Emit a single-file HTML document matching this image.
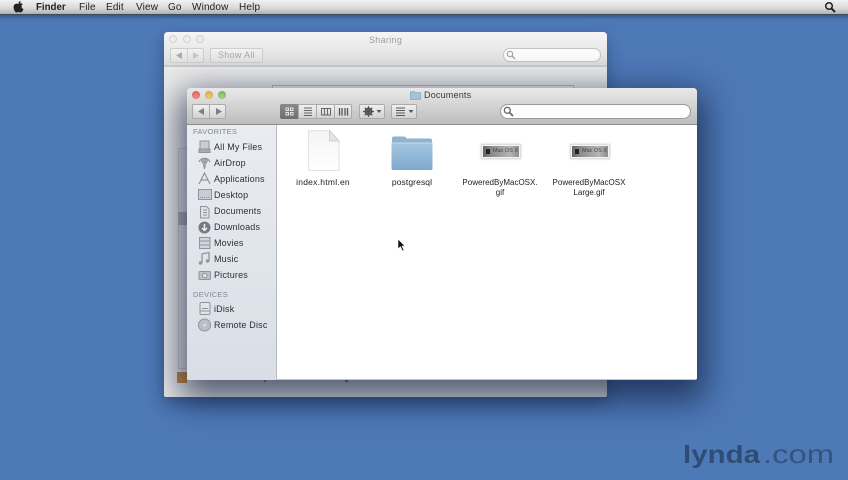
<!DOCTYPE html>
<html style="background:#4e79b7"><head><meta charset="utf-8">
<style>
html,body{margin:0;padding:0}
body{width:848px;height:480px;overflow:hidden;position:relative;background:#4e79b7;font-family:"Liberation Sans",sans-serif;color:#222;filter:blur(.35px)}
div,span,svg{position:absolute;box-sizing:border-box}
.m{top:1px;font-size:10px;line-height:13px;color:#222;white-space:nowrap;letter-spacing:.15px}
.tl{width:8px;height:8px;border-radius:50%}
.gl{width:8px;height:8px;border-radius:50%;background:#ececec;border:1px solid #d2d2d2}
.btn{background:linear-gradient(#f0f0f0,#d2d2d2);border:1px solid #aaa;border-radius:2px;height:15px}
.s{left:214px;font-size:9px;line-height:12px;color:#2c2f36;white-space:nowrap;letter-spacing:.18px}
.f{font-size:8.5px;line-height:10px;color:#222;text-align:center;white-space:nowrap;letter-spacing:.1px}
.g{font-size:8px;letter-spacing:0}
.h{left:193px;font-size:7.5px;line-height:10px;color:#7d8793;letter-spacing:.3px;white-space:nowrap}
</style></head>
<body>
<!-- menu bar -->
<div style="left:0;top:0;width:848px;height:15px;background:linear-gradient(#f2f2f2,#d8d8d8 60%,#b0b0b0);border-bottom:1px solid #3c4a5e"></div>
<div style="left:0;top:15px;width:848px;height:5px;background:linear-gradient(rgba(30,50,85,.45),rgba(30,50,85,0))"></div>
<svg style="left:13px;top:1px" width="11" height="12" viewBox="0 0 11 12"><path d="M5.500 3C4 2.200 1 2.500.6 5.600.3 8 2 11.500 3.600 11.500c.8 0 1.100-.5 2-.5s1.100.5 2 .5c1.200 0 2.400-2 2.900-3.400C9 7.500 8.500 6.300 8.500 5.200c0-1 .6-1.700 1.300-2.100C9 2.100 7 2 5.500 3zM5.400 2.600C5.300 1.400 6.200.2 7.700 0c.1 1.400-1 2.600-2.300 2.600z" fill="#222"/></svg>
<div class="m" style="left:36px;font-weight:bold;letter-spacing:0;font-size:9.7px">Finder</div>
<div class="m" style="left:79px">File</div>
<div class="m" style="left:106px">Edit</div>
<div class="m" style="left:136px">View</div>
<div class="m" style="left:168px">Go</div>
<div class="m" style="left:192px">Window</div>
<div class="m" style="left:239px">Help</div>
<svg style="left:824px;top:1px" width="12" height="12" viewBox="0 0 12 12"><circle cx="5" cy="5" r="3.300" fill="none" stroke="#222" stroke-width="1.500"/><path d="M7.500 7.500L11 11" stroke="#222" stroke-width="2"/></svg>

<!-- back window -->
<div style="left:164px;top:32px;width:443px;height:365px;background:#ececec;border-radius:4px 4px 2px 2px;box-shadow:0 6px 16px rgba(20,35,70,.4)"></div>
<div style="left:164px;top:32px;width:443px;height:35px;background:linear-gradient(#f5f5f5,#dedede);border-radius:4px 4px 0 0;border-bottom:2px solid #cbcbcb"></div>
<div class="gl" style="left:169px;top:35px"></div>
<div class="gl" style="left:183px;top:35px"></div>
<div class="gl" style="left:196px;top:35px"></div>
<div style="left:369px;top:34px;font-size:9px;line-height:12px;color:#9c9c9c;letter-spacing:.3px">Sharing</div>
<div class="btn" style="left:170px;top:48px;width:34px;height:15px;background:linear-gradient(#f2f2f2,#e2e2e2);border-color:#cdcdcd"></div>
<div style="left:187px;top:48px;width:1px;height:15px;background:#d2d2d2"></div>
<svg style="left:176px;top:51px" width="24" height="9" viewBox="0 0 24 9"><path d="M0 4.500L6 1v7z" fill="#acacac"/><path d="M23 4.500L17 1v7z" fill="#c8c8c8"/></svg>
<div class="btn" style="left:210px;top:48px;width:53px;background:linear-gradient(#f2f2f2,#e2e2e2);border-color:#cdcdcd"></div>
<div style="left:218px;top:49px;font-size:9px;line-height:13px;color:#a8a8a8;letter-spacing:.3px">Show All</div>
<div style="left:503px;top:48px;width:98px;height:14px;border-radius:7px;background:#fbfbfb;border:1px solid #c4c4c4"></div>
<svg style="left:506px;top:50px" width="10" height="10" viewBox="0 0 10 10"><circle cx="4" cy="4" r="2.700" fill="none" stroke="#a5a5a5" stroke-width="1.200"/><path d="M6 6L9 9" stroke="#a5a5a5" stroke-width="1.500"/></svg>
<div style="left:272px;top:85px;width:302px;height:4px;background:#f2f2f2;border:1px solid #bdbdbd;border-bottom:0"></div>
<!-- back window inner panel -->
<div style="left:178px;top:148px;width:9px;height:220px;background:#e8e8e8;border-left:1px solid #cfcfcf"></div>
<div style="left:178px;top:148px;width:9px;height:1px;background:#cdcdcd"></div>
<div style="left:178px;top:212px;width:9px;height:13px;background:#b4b4b4"></div>
<div style="left:178px;top:368px;width:9px;height:1px;background:#d0d0d0"></div>
<div style="left:177px;top:372px;width:10px;height:11px;background:#c88a3c"></div>

<!-- front window -->
<div style="left:187px;top:88px;width:510px;height:292px;background:#fff;border-radius:4px 4px 2px 2px;border-bottom:1px solid #c4c4c4;box-shadow:0 12px 34px 8px rgba(15,28,60,.7)"></div>
<div style="left:264px;top:380px;width:2px;height:2px;background:#444"></div>
<div style="left:345px;top:380px;width:3px;height:2px;background:#444"></div>
<div style="left:187px;top:88px;width:510px;height:37px;background:linear-gradient(#e9e9e9,#bdbdbd);border-radius:4px 4px 0 0;border-bottom:1px solid #8b8b8b"></div>
<div class="tl" style="left:192px;top:91px;background:radial-gradient(circle at 50% 70%,#ee8f88,#cf5450)"></div>
<div class="tl" style="left:205px;top:91px;background:radial-gradient(circle at 50% 70%,#eecb7c,#cf9c42)"></div>
<div class="tl" style="left:218px;top:91px;background:radial-gradient(circle at 50% 70%,#a8d48a,#6aa75a)"></div>
<svg style="left:410px;top:90px" width="11" height="10" viewBox="0 0 11 10"><path d="M.5 1.500h3.500l1 1h5.500v7H.5z" fill="#a3c3dd" stroke="#7696b2" stroke-width=".6"/></svg>
<div style="left:424px;top:89px;font-size:9px;line-height:12px;color:#3a3a3a;letter-spacing:.2px">Documents</div>
<!-- nav -->
<div class="btn" style="left:192px;top:104px;width:34px"></div>
<div style="left:209px;top:104px;width:1px;height:15px;background:#aaa"></div>
<svg style="left:198px;top:107px" width="24" height="9" viewBox="0 0 24 9"><path d="M0 4.500L6 1v7z" fill="#808080"/><path d="M24 4.500L18 1v7z" fill="#808080"/></svg>
<!-- view buttons -->
<div class="btn" style="left:280px;top:104px;width:72px"></div>
<div style="left:280px;top:104px;width:18px;height:15px;background:linear-gradient(#8a8a8a,#6e6e6e);border-radius:2px 0 0 2px"></div>
<svg style="left:280px;top:104px" width="72" height="15" viewBox="0 0 72 15" fill="none">
<g stroke="#e8e8e8" stroke-width="1"><rect x="6" y="4" width="2.500" height="2.500"/><rect x="10.500" y="4" width="2.500" height="2.500"/><rect x="6" y="8.500" width="2.500" height="2.500"/><rect x="10.500" y="8.500" width="2.500" height="2.500"/></g>
<path d="M18.500 0v15M36.500 0v15M54.500 0v15" stroke="#aaa"/>
<path d="M24 4h8M24 6.500h8M24 9h8M24 11.500h8" stroke="#666"/>
<rect x="41.500" y="4.500" width="9" height="6.500" stroke="#666"/><path d="M44.500 4.500v6.500M47.500 4.500v6.500" stroke="#666"/>
<path d="M59.500 4v7.500M62 4v7.500M65 4v7.500M67.500 4v7.500" stroke="#555" stroke-width="1.300"/>
</svg>
<!-- action -->
<div class="btn" style="left:359px;top:104px;width:26px"></div>
<svg style="left:363px;top:106px" width="20" height="11" viewBox="0 0 20 11"><circle cx="5.500" cy="5.500" r="3" fill="none" stroke="#555" stroke-width="2"/><path d="M5.500 0v11M0 5.500h11M1.700 1.700l7.600 7.600M9.300 1.700L1.700 9.300" stroke="#555" stroke-width="1.200"/><path d="M13.500 4h5l-2.500 3z" fill="#555"/></svg>
<!-- arrange -->
<div class="btn" style="left:391px;top:104px;width:26px"></div>
<svg style="left:396px;top:107px" width="19" height="9" viewBox="0 0 19 9"><path d="M0 1h9M0 3.500h9M0 6h9M0 8.500h9" stroke="#555" stroke-width="1"/><path d="M12.500 3h5L15 6z" fill="#555"/></svg>
<!-- search -->
<div style="left:500px;top:104px;width:191px;height:15px;border-radius:8px;background:#fdfdfd;border:1px solid #999"></div>
<svg style="left:503px;top:106px" width="11" height="11" viewBox="0 0 11 11"><circle cx="4.300" cy="4.300" r="3" fill="none" stroke="#666" stroke-width="1.300"/><path d="M6.500 6.500L10 10" stroke="#666" stroke-width="1.700"/></svg>

<!-- sidebar -->
<div style="left:187px;top:125px;width:90px;height:255px;background:linear-gradient(#e9ecf1,#d9dee6);border-right:1px solid #b7bbc1;border-radius:0 0 0 2px"></div>
<div class="h" style="top:127px">FAVORITES</div>
<div class="s" style="top:141px">All My Files</div>
<div class="s" style="top:157px">AirDrop</div>
<div class="s" style="top:173px">Applications</div>
<div class="s" style="top:189px">Desktop</div>
<div class="s" style="top:205px">Documents</div>
<div class="s" style="top:221px">Downloads</div>
<div class="s" style="top:237px">Movies</div>
<div class="s" style="top:253px">Music</div>
<div class="s" style="top:269px">Pictures</div>
<div class="h" style="top:290px">DEVICES</div>
<div class="s" style="top:303px">iDisk</div>
<div class="s" style="top:319px">Remote Disc</div>
<svg style="left:197px;top:140px" width="16" height="194" viewBox="0 0 16 194" fill="none" stroke="#8f959c">
<rect x="3" y="1" width="9" height="8" fill="#c9cdd3"/><rect x="2" y="9" width="11" height="3.500" fill="#a6abb2"/>
<path d="M2 22a6 6 0 0 1 11 0" stroke-width="1.200"/><path d="M4.500 22a3 3 0 0 1 6 0" stroke-width="1.200"/><circle cx="7.500" cy="22.500" r="2.500" fill="#9ca2aa" stroke="none"/><path d="M6.500 25l1 4 1-4" fill="#9ca2aa"/>
<path d="M2 44L7.500 33 13 44M4 40h7" stroke-width="1.200"/>
<rect x="1.500" y="49.500" width="13" height="10" fill="#c9cdd3"/><path d="M3 57.500h10" stroke-dasharray="1 1"/>
<path d="M3.500 66.500h6l2.500 2.500v9h-8.500z" fill="#e0e3e8"/><path d="M6 70h4M6 72.500h4M6 75h4"/>
<circle cx="7.500" cy="87.500" r="6" fill="#767c84" stroke="none"/><path d="M7.500 84v6M5 88l2.500 2.500L10 88" stroke="#eceef1" stroke-width="1.500"/>
<rect x="2.500" y="97.500" width="10.500" height="11" fill="#d2d5db"/><path d="M2.500 101h10.500M2.500 105h10.500"/>
<path d="M5 123v-9l7-1.500v9" stroke-width="1.300"/><circle cx="3.500" cy="123" r="1.700" fill="#8f959c" stroke="none"/><circle cx="10.500" cy="121" r="1.700" fill="#8f959c" stroke="none"/>
<rect x="2" y="131.500" width="11.500" height="8" rx="1" fill="#bec2c9"/><circle cx="7.700" cy="135.500" r="2.300" fill="#e2e4e8"/>
<rect x="3" y="162.500" width="10" height="12" rx="1.500" fill="#e1e4e9"/><path d="M5 168.500h6M3.500 171h9"/>
<circle cx="7.500" cy="185" r="6" fill="#bcc0c6"/><circle cx="7.500" cy="185" r="1.500" fill="#d5d8dc" stroke="none"/>
</svg>

<!-- file icons -->
<svg style="left:305px;top:128px" width="38" height="45" viewBox="0 0 38 45"><defs><linearGradient id="d" x1="0" y1="0" x2="0" y2="1"><stop offset="0" stop-color="#f4f4f4"/><stop offset="1" stop-color="#ffffff"/></linearGradient></defs><path d="M3.500 2.500h21l9.500 10.500v29.500h-30.500z" fill="url(#d)" stroke="#e2e2e2"/><path d="M24.500 2.500v10.500h9.500z" fill="#e4e4e4" stroke="#cbcbcb" stroke-width=".8"/></svg>
<svg style="left:390px;top:134px" width="44" height="38" viewBox="0 0 44 38"><defs><linearGradient id="fo" x1="0" y1="0" x2="0" y2="1"><stop offset="0" stop-color="#a4c6e0"/><stop offset="1" stop-color="#7fa9cd"/></linearGradient></defs><path d="M2 4.500q0-2 2-2h10q1.500 0 2.500 2h23.500q2 0 2 2v28q0 1.500-2 1.500h-36q-2 0-2-1.500z" fill="#8cb3d1"/><path d="M1.500 9h41v25.500q0 1.500-2 1.500h-37q-2 0-2-1.500z" fill="url(#fo)"/><path d="M1.500 9h41" stroke="#c6dcec"/></svg>
<div style="left:481px;top:144px;width:40px;height:15px;background:#f4f4f4;border:1px solid #dedede;box-shadow:0 0 2px #ccc"></div>
<div style="left:483px;top:146px;width:36px;height:11px;background:linear-gradient(90deg,#666,#8d8d8d 25%,#b5b5b5 75%,#8d8d8d)"></div>
<div style="left:486px;top:149px;width:4px;height:5px;background:#222"></div>
<div style="left:493px;top:147px;font-size:5.500px;line-height:9px;color:#444;white-space:nowrap">Mac OS X</div>
<div style="left:570px;top:144px;width:40px;height:15px;background:#f4f4f4;border:1px solid #dedede;box-shadow:0 0 2px #ccc"></div>
<div style="left:572px;top:146px;width:36px;height:11px;background:linear-gradient(90deg,#666,#8d8d8d 25%,#b5b5b5 75%,#8d8d8d)"></div>
<div style="left:575px;top:149px;width:4px;height:5px;background:#222"></div>
<div style="left:582px;top:147px;font-size:5.500px;line-height:9px;color:#444;white-space:nowrap">Mac OS X</div>

<div class="f" style="left:283px;width:80px;top:177px;letter-spacing:.25px">index.html.en</div>
<div class="f" style="left:372px;width:80px;top:177px">postgresql</div>
<div class="f g" style="left:450px;width:100px;top:178px">PoweredByMacOSX.<br>gif</div>
<div class="f g" style="left:539px;width:100px;top:178px">PoweredByMacOSX<br>Large.gif</div>

<!-- cursor -->
<svg style="left:397px;top:238px" width="10" height="15" viewBox="0 0 10 15"><path d="M1 1v10l2.500-2.300L5.500 13l1.500-.7-2-4.200H8z" fill="#111" stroke="#fff" stroke-width=".6"/></svg>

<!-- lynda logo -->
<svg style="left:675px;top:432px" width="170" height="44" viewBox="0 0 170 44">
<text x="8" y="31" font-family="'Liberation Sans',sans-serif" font-size="25" font-weight="bold" fill="#2f4d74" textLength="77" lengthAdjust="spacingAndGlyphs">lynda</text>
<text x="88" y="31" font-family="'Liberation Sans',sans-serif" font-size="26" fill="#2f4d74" fill-opacity=".85" textLength="71" lengthAdjust="spacingAndGlyphs">.com</text>
</svg>
</body></html>
